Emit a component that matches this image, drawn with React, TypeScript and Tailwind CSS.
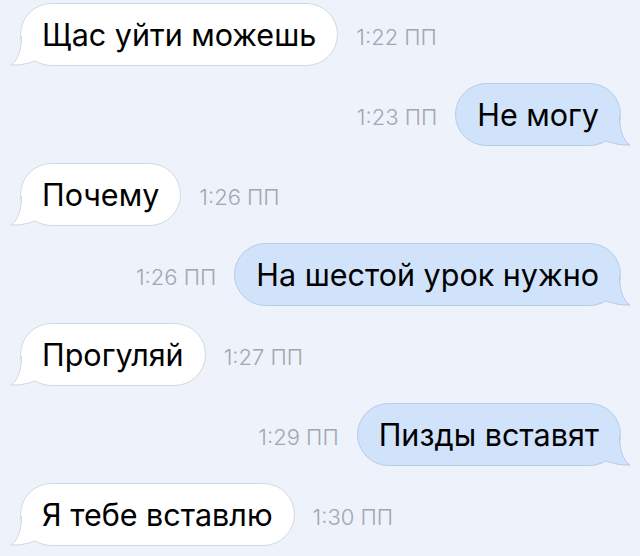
import React from "react";

type Msg = { text: string; time: string; out?: boolean };

const messages: Msg[] = [
  { text: "Щас уйти можешь", time: "1:22 ПП" },
  { text: "Не могу", time: "1:23 ПП", out: true },
  { text: "Почему", time: "1:26 ПП" },
  { text: "На шестой урок нужно", time: "1:26 ПП", out: true },
  { text: "Прогуляй", time: "1:27 ПП" },
  { text: "Пизды вставят", time: "1:29 ПП", out: true },
  { text: "Я тебе вставлю", time: "1:30 ПП" },
];

const Tail = ({ out }: { out?: boolean }) => {
  const fill = out ? "#d1e2fb" : "#ffffff";
  const stroke = out ? "#b8cbe8" : "#d3d7e0";
  return (
    <svg
      width="32"
      height="30"
      viewBox="0 0 32 30"
      className={`absolute bottom-[-1px] ${out ? "right-[-11px] -scale-x-100" : "left-[-11px]"}`}
    >
      <path
        d="M11.5 0 C11.5 14 8 24 1 29 C10 29.5 18 27.5 25 25 L31 14 L22 0 Z"
        fill={fill}
      />
      <path
        d="M11.5 0 C11.5 14 8 24 1 29 C10 29.5 18 27.5 25 25"
        fill="none"
        stroke={stroke}
        strokeWidth="1"
      />
    </svg>
  );
};

const Bubble = ({ m }: { m: Msg }) => (
  <div
    className={`relative h-[63px] flex items-center px-[21px] rounded-full border text-[30.5px] text-black ${
      m.out ? "bg-[#d1e2fb] border-[#b8cbe8]" : "bg-white border-[#d3d7e0]"
    }`}
  >
    <Tail out={m.out} />
    <span className="relative">{m.text}</span>
  </div>
);

export default function App() {
  return (
    <div
      className="w-[640px] h-[556px] overflow-hidden bg-[#eef2fb] flex flex-col gap-[17px] pt-[3px]"
      style={{ fontFamily: 'Inter, "Noto Sans", sans-serif' }}
    >
      {messages.map((m, i) => (
        <div
          key={i}
          className={`flex items-center gap-[18px] ${
            m.out ? "flex-row-reverse pr-[19px]" : "pl-[20px]"
          }`}
        >
          <Bubble m={m} />
          <span className="text-[22px] font-light text-[#a2a6af] pt-[6px]">{m.time}</span>
        </div>
      ))}
    </div>
  );
}
